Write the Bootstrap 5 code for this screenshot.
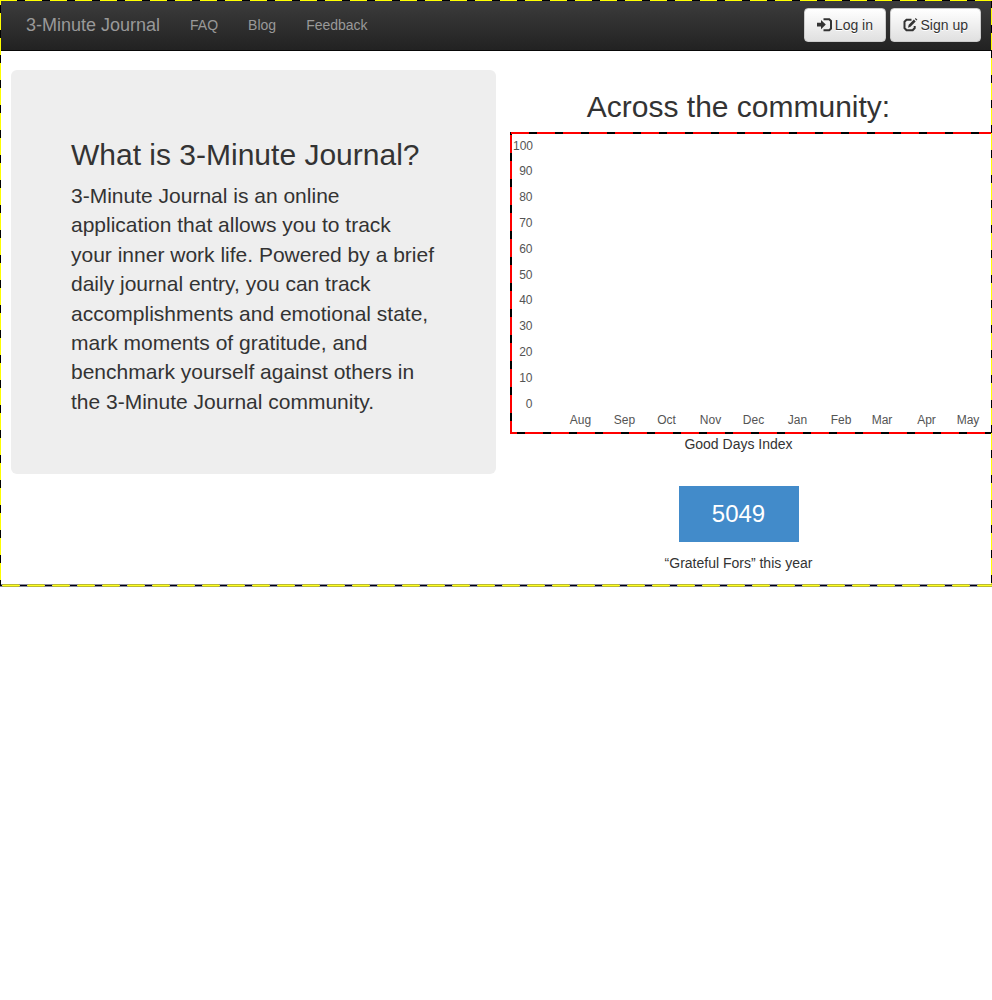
<!DOCTYPE html>
<html lang="en">
<head>
<meta charset="utf-8">
<meta name="viewport" content="width=device-width, initial-scale=1">
<title>3-Minute Journal</title>
<link href="https://cdn.jsdelivr.net/npm/bootstrap@5.3.0/dist/css/bootstrap.min.css" rel="stylesheet">
<style>
body{font-family:"Liberation Sans",Arial,sans-serif;font-size:14px;line-height:20px;color:#333;overflow-x:hidden}
.page-shell{height:587px;padding:1px 1px 0}
/* dashed frame round the page */
.frame{inset:0;z-index:5;background:
 repeating-linear-gradient(90deg,#ff0 0 17px,#000 17px 25px) 0 0/100% 1px no-repeat,
 repeating-linear-gradient(180deg,#ff0 0 5px,#000 5px 13px,#ff0 13px 25px) 0 0/1px 585px no-repeat,
 repeating-linear-gradient(180deg,#000 0 8px,#ff0 8px 25px) 100% 0/1px 584px no-repeat}
.frame-foot{left:0;right:0;bottom:0;height:3px;background:
 linear-gradient(90deg,#001 0 2px,#ff2 2px 20px,#001 20px) 0 1px/25px 1px repeat-x,
 linear-gradient(90deg,#889 0 3px,#bb3 3px 19px,#889 19px) 0 0/25px 3px repeat-x}
.topbar{height:50px;border-bottom:1px solid #080808;background:linear-gradient(#3c3c3c,#222)}
.topbar .navbar-brand{font-size:18px;line-height:20px;color:#999;padding:14px 15px 16px;margin:0 0 0 10px}
.topbar .navbar-nav .nav-link{color:#999;padding:14px 15px 16px;line-height:20px}
.tools{padding:0 10px 2px 0}
.btn-tool{--bs-btn-color:#333;--bs-btn-font-size:14px;--bs-btn-line-height:20px;--bs-btn-padding-x:12px;--bs-btn-padding-y:6px;--bs-btn-border-color:#ccc;--bs-btn-border-radius:4px;background:linear-gradient(#fff,#e0e0e0);height:34px;text-shadow:0 1px 0 #fff;white-space:nowrap}
.btn-tool svg{width:15px;height:14px;vertical-align:-2px;margin-right:3px;margin-left:-.5px}
.intro{width:485px;height:404px;margin:19px 0 0 10px;padding:68px 0 0 60px;background:#eee;border-radius:6px}
.title{font-size:30px;line-height:33px;margin:0 0 10px;font-weight:400}
.intro p{font-size:21px;line-height:29.4px;margin:0}
.community{width:482px;margin-left:14px;padding-top:39px}
.center-col{width:457px}
.community .title{margin-bottom:9px}
.chart{width:482px;height:302px;background:
 repeating-linear-gradient(90deg,#000 0 1px,red 1px 19px,#000 19px 26px) 0 0/100% 2px no-repeat,
 linear-gradient(90deg,red 0 7px,#000 7px 15px,red 15px) 0 100%/26px 2px repeat-x,
 linear-gradient(180deg,#000 0 3px,red 3px 21px,#000 21px) 0 0/2px 26px repeat-y}
.chart text{font-size:12px;fill:#545454}
.tally{width:120px;height:56px;background:#428bca;font-size:24px;line-height:56px;color:#fff;margin-top:32px;margin-bottom:11px}
</style>
</head>
<body>
<div class="page-shell position-relative">
 <nav class="navbar topbar navbar-expand p-0 flex-nowrap">
  <a class="navbar-brand" href="#">3-Minute Journal</a>
  <div class="navbar-nav me-auto"><a class="nav-link" href="#">FAQ</a><a class="nav-link" href="#">Blog</a><a class="nav-link" href="#">Feedback</a></div>
  <div class="d-flex gap-1 tools">
   <a class="btn btn-tool" href="#"><svg viewBox="0 0 15 14"><path fill="#333" d="M0 4.800h4V2l4.800 4.600L4 11.200V8.500H0z"/><path fill="none" stroke="#333" stroke-width="2" d="M6.500 1.200h5.700l1.800 1.800v7.500l-1.800 1.800H6.500"/></svg>Log in</a>
   <a class="btn btn-tool" href="#"><svg viewBox="0 0 15 14"><path fill="none" stroke="#333" stroke-width="2" d="M8.500 1.700H3.500L1.500 3.700v6.300l2 2.200h6.200l2-2.200V8"/><path fill="#333" d="M5 9.700l.7-3L10.900 1.600l1.800 1.800L7.500 8.800zM11.900.9l.8-.8 1.700 1.700-.8.8z"/></svg>Sign up</a>
  </div>
 </nav>
 <main class="d-flex">
  <section class="intro flex-shrink-0">
   <h2 class="title">What is 3-Minute Journal?</h2>
   <p>3-Minute Journal is an online<br>application that allows you to track<br>your inner work life. Powered by a brief<br>daily journal entry, you can track<br>accomplishments and emotional state,<br>mark moments of gratitude, and<br>benchmark yourself against others in<br>the 3-Minute Journal community.</p>
  </section>
  <section class="community flex-shrink-0">
   <h2 class="title center-col text-center">Across the community:</h2>
   <svg class="chart d-block" viewBox="510 132 482 302">
    <g text-anchor="end"><text x="533" y="150">100</text><text x="532.5" y="175">90</text><text x="532.5" y="201">80</text><text x="532.5" y="227">70</text><text x="532.5" y="253">60</text><text x="532.5" y="279">50</text><text x="532.5" y="304">40</text><text x="532.5" y="330">30</text><text x="532.5" y="356">20</text><text x="532.5" y="382">10</text><text x="532.5" y="408">0</text></g>
    <g text-anchor="middle"><text x="580.5" y="424">Aug</text><text x="624.5" y="424">Sep</text><text x="666.5" y="424">Oct</text><text x="710.5" y="424">Nov</text><text x="753.5" y="424">Dec</text><text x="797.5" y="424">Jan</text><text x="841" y="424">Feb</text><text x="882" y="424">Mar</text><text x="926.5" y="424">Apr</text><text x="968" y="424">May</text></g>
   </svg>
   <div class="center-col text-center">
    <div>Good Days Index</div>
    <div class="tally mx-auto">5049</div>
    <div>“Grateful Fors” this year</div>
   </div>
  </section>
 </main>
 <div class="frame position-absolute pe-none"></div>
 <div class="frame-foot position-absolute"></div>
</div>
<script src="https://cdn.jsdelivr.net/npm/bootstrap@5.3.0/dist/js/bootstrap.bundle.min.js"></script>
</body>
</html>
